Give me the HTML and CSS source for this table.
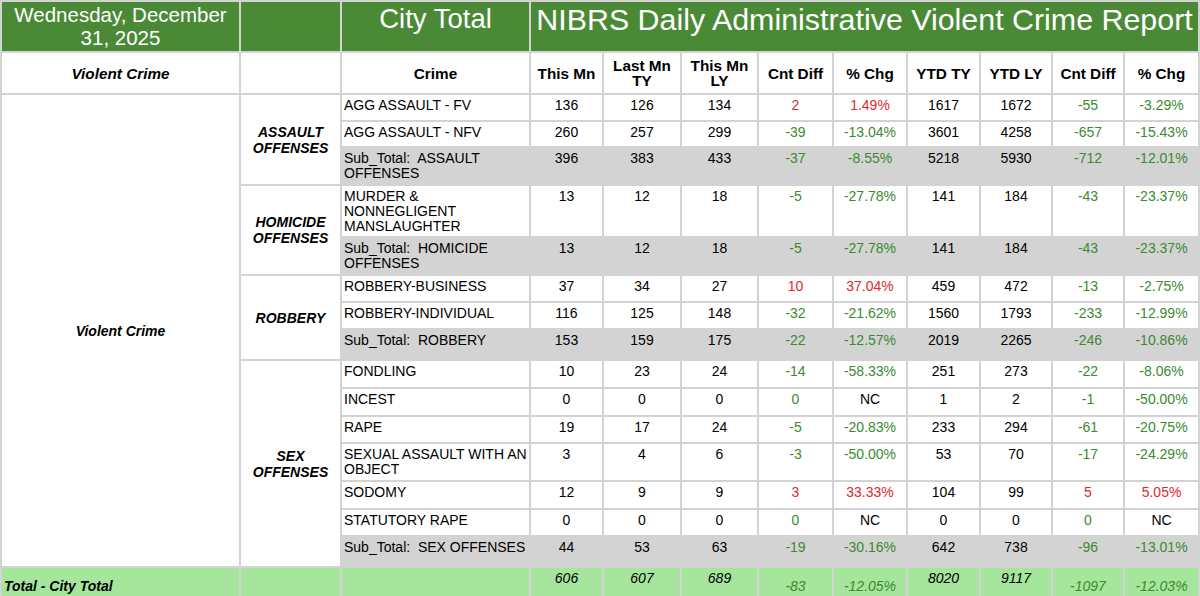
FILE: index.html
```html
<!DOCTYPE html>
<html>
<head>
<meta charset="utf-8">
<title>NIBRS Daily Administrative Violent Crime Report</title>
<link rel="stylesheet" href="styles.css">
</head>
<body>
<table class="rpt">
  <colgroup>
    <col class="c-cat"><col class="c-grp"><col class="c-crime">
    <col class="c-a"><col class="c-b"><col class="c-c"><col class="c-d"><col class="c-e"><col class="c-f"><col class="c-g"><col class="c-h"><col class="c-i">
  </colgroup>
  <thead>
    <tr class="title">
      <th class="date">Wednesday, December<br>31, 2025</th>
      <th></th>
      <th class="city">City Total</th>
      <th class="big" colspan="9">NIBRS Daily Administrative Violent Crime Report</th>
    </tr>
    <tr class="head">
      <th class="bi">Violent Crime</th>
      <th></th>
      <th>Crime</th>
      <th>This Mn</th>
      <th>Last Mn<br>TY</th>
      <th>This Mn<br>LY</th>
      <th>Cnt Diff</th>
      <th>% Chg</th>
      <th>YTD TY</th>
      <th>YTD LY</th>
      <th>Cnt Diff</th>
      <th>% Chg</th>
    </tr>
  </thead>
  <tbody>
    <tr class="h27">
      <td class="cat" rowspan="15">Violent Crime</td>
      <td class="grp" rowspan="3">ASSAULT<br>OFFENSES</td>
      <td class="crime">AGG ASSAULT - FV</td>
      <td>136</td><td>126</td><td>134</td><td class="up">2</td><td class="up">1.49%</td><td>1617</td><td>1672</td><td class="dn">-55</td><td class="dn">-3.29%</td>
    </tr>
    <tr class="h26">
      <td class="crime">AGG ASSAULT - NFV</td>
      <td>260</td><td>257</td><td>299</td><td class="dn">-39</td><td class="dn">-13.04%</td><td>3601</td><td>4258</td><td class="dn">-657</td><td class="dn">-15.43%</td>
    </tr>
    <tr class="h38 sub">
      <td class="crime">Sub_Total:&nbsp; ASSAULT<br>OFFENSES</td>
      <td>396</td><td>383</td><td>433</td><td class="dn">-37</td><td class="dn">-8.55%</td><td>5218</td><td>5930</td><td class="dn">-712</td><td class="dn">-12.01%</td>
    </tr>
    <tr class="h52">
      <td class="grp" rowspan="2">HOMICIDE<br>OFFENSES</td>
      <td class="crime">MURDER &amp;<br>NONNEGLIGENT<br>MANSLAUGHTER</td>
      <td>13</td><td>12</td><td>18</td><td class="dn">-5</td><td class="dn">-27.78%</td><td>141</td><td>184</td><td class="dn">-43</td><td class="dn">-23.37%</td>
    </tr>
    <tr class="h38 sub">
      <td class="crime">Sub_Total:&nbsp; HOMICIDE<br>OFFENSES</td>
      <td>13</td><td>12</td><td>18</td><td class="dn">-5</td><td class="dn">-27.78%</td><td>141</td><td>184</td><td class="dn">-43</td><td class="dn">-23.37%</td>
    </tr>
    <tr class="h27">
      <td class="grp" rowspan="3">ROBBERY</td>
      <td class="crime">ROBBERY-BUSINESS</td>
      <td>37</td><td>34</td><td>27</td><td class="up">10</td><td class="up">37.04%</td><td>459</td><td>472</td><td class="dn">-13</td><td class="dn">-2.75%</td>
    </tr>
    <tr class="h27">
      <td class="crime">ROBBERY-INDIVIDUAL</td>
      <td>116</td><td>125</td><td>148</td><td class="dn">-32</td><td class="dn">-21.62%</td><td>1560</td><td>1793</td><td class="dn">-233</td><td class="dn">-12.99%</td>
    </tr>
    <tr class="h31 sub">
      <td class="crime">Sub_Total:&nbsp; ROBBERY</td>
      <td>153</td><td>159</td><td>175</td><td class="dn">-22</td><td class="dn">-12.57%</td><td>2019</td><td>2265</td><td class="dn">-246</td><td class="dn">-10.86%</td>
    </tr>
    <tr class="h28">
      <td class="grp" rowspan="7">SEX<br>OFFENSES</td>
      <td class="crime">FONDLING</td>
      <td>10</td><td>23</td><td>24</td><td class="dn">-14</td><td class="dn">-58.33%</td><td>251</td><td>273</td><td class="dn">-22</td><td class="dn">-8.06%</td>
    </tr>
    <tr class="h28">
      <td class="crime">INCEST</td>
      <td>0</td><td>0</td><td>0</td><td class="dn">0</td><td>NC</td><td>1</td><td>2</td><td class="dn">-1</td><td class="dn">-50.00%</td>
    </tr>
    <tr class="h27">
      <td class="crime">RAPE</td>
      <td>19</td><td>17</td><td>24</td><td class="dn">-5</td><td class="dn">-20.83%</td><td>233</td><td>294</td><td class="dn">-61</td><td class="dn">-20.75%</td>
    </tr>
    <tr class="h38">
      <td class="crime">SEXUAL ASSAULT WITH AN<br>OBJECT</td>
      <td>3</td><td>4</td><td>6</td><td class="dn">-3</td><td class="dn">-50.00%</td><td>53</td><td>70</td><td class="dn">-17</td><td class="dn">-24.29%</td>
    </tr>
    <tr class="h28">
      <td class="crime">SODOMY</td>
      <td>12</td><td>9</td><td>9</td><td class="up">3</td><td class="up">33.33%</td><td>104</td><td>99</td><td class="up">5</td><td class="up">5.05%</td>
    </tr>
    <tr class="h27">
      <td class="crime">STATUTORY RAPE</td>
      <td>0</td><td>0</td><td>0</td><td class="dn">0</td><td>NC</td><td>0</td><td>0</td><td class="dn">0</td><td>NC</td>
    </tr>
    <tr class="h31 sub">
      <td class="crime">Sub_Total:&nbsp; SEX OFFENSES</td>
      <td>44</td><td>53</td><td>63</td><td class="dn">-19</td><td class="dn">-30.16%</td><td>642</td><td>738</td><td class="dn">-96</td><td class="dn">-13.01%</td>
    </tr>
  </tbody>
  <tfoot>
    <tr class="total">
      <td class="tlabel">Total - City Total</td>
      <td></td>
      <td></td>
      <td class="tv">606</td><td class="tv">607</td><td class="tv">689</td>
      <td class="tg">-83</td><td class="tg">-12.05%</td>
      <td class="tv">8020</td><td class="tv">9117</td>
      <td class="tg">-1097</td><td class="tg">-12.03%</td>
    </tr>
  </tfoot>
</table>
</body>
</html>
```

FILE: styles.css
```css
html, body {
  margin: 0;
  padding: 0;
  background: #ffffff;
}

body {
  font-family: "Liberation Sans", Arial, Helvetica, sans-serif;
  color: #000000;
}

.rpt {
  border-collapse: collapse;
  table-layout: fixed;
  width: 1198px;
  font-size: 14px;
  line-height: 15px;
}

.c-cat { width: 239px; }
.c-grp { width: 101px; }
.c-crime { width: 189px; }
.c-a { width: 73px; }
.c-b { width: 78px; }
.c-c { width: 77px; }
.c-d { width: 75px; }
.c-e { width: 74px; }
.c-f { width: 73px; }
.c-g { width: 72px; }
.c-h { width: 72px; }
.c-i { width: 75px; }

.rpt th,
.rpt td {
  border: 2px solid #d3d3d3;
  padding: 3px 2px 0;
  vertical-align: top;
  text-align: center;
  overflow: hidden;
  white-space: nowrap;
}

/* green title band */
.title { height: 51px; }

.title th {
  background: #4a8a37;
  color: #ffffff;
  font-weight: normal;
  padding: 0;
  vertical-align: top;
}

.title .date {
  font-size: 20.5px;
  line-height: 23px;
  padding-top: 1px;
}

.title .city {
  font-size: 27.5px;
  line-height: 34px;
  padding-top: 0;
}

.title .big {
  font-size: 30.4px;
  line-height: 34px;
  padding-top: 0;
}

/* column header row */
.head { height: 42px; }

.head th {
  font-size: 15.3px;
  font-weight: bold;
  vertical-align: middle;
  padding: 0 2px;
  line-height: 15px;
}

.head .bi { font-style: italic; }

/* body rows */
.h26 { height: 26px; }
.h27 { height: 27px; }
.h28 { height: 28px; }
.h31 { height: 31px; }
.h38 { height: 38px; }
.h52 { height: 52px; }

.cat,
.grp {
  font-weight: bold;
  font-style: italic;
  line-height: 16px;
  background: #ffffff;
}

.rpt td.cat,
.rpt td.grp {
  padding: 0 2px;
  vertical-align: middle;
}

.rpt td.crime {
  text-align: left;
  padding-left: 2px;
}

.sub td {
  background: #d3d3d3;
}

.up { color: #e3262b; }
.dn { color: #3b8a2e; }

/* total row */
.total { height: 38px; }

.total td {
  background: #a6e59c;
  font-style: italic;
}

.rpt td.tlabel {
  text-align: left;
  font-weight: bold;
  vertical-align: middle;
  padding: 0 2px;
}

.rpt td.tv {
  vertical-align: top;
  padding-top: 3px;
}

.rpt td.tg {
  color: #3b8a2e;
  vertical-align: middle;
  padding: 0 2px;
}
```
